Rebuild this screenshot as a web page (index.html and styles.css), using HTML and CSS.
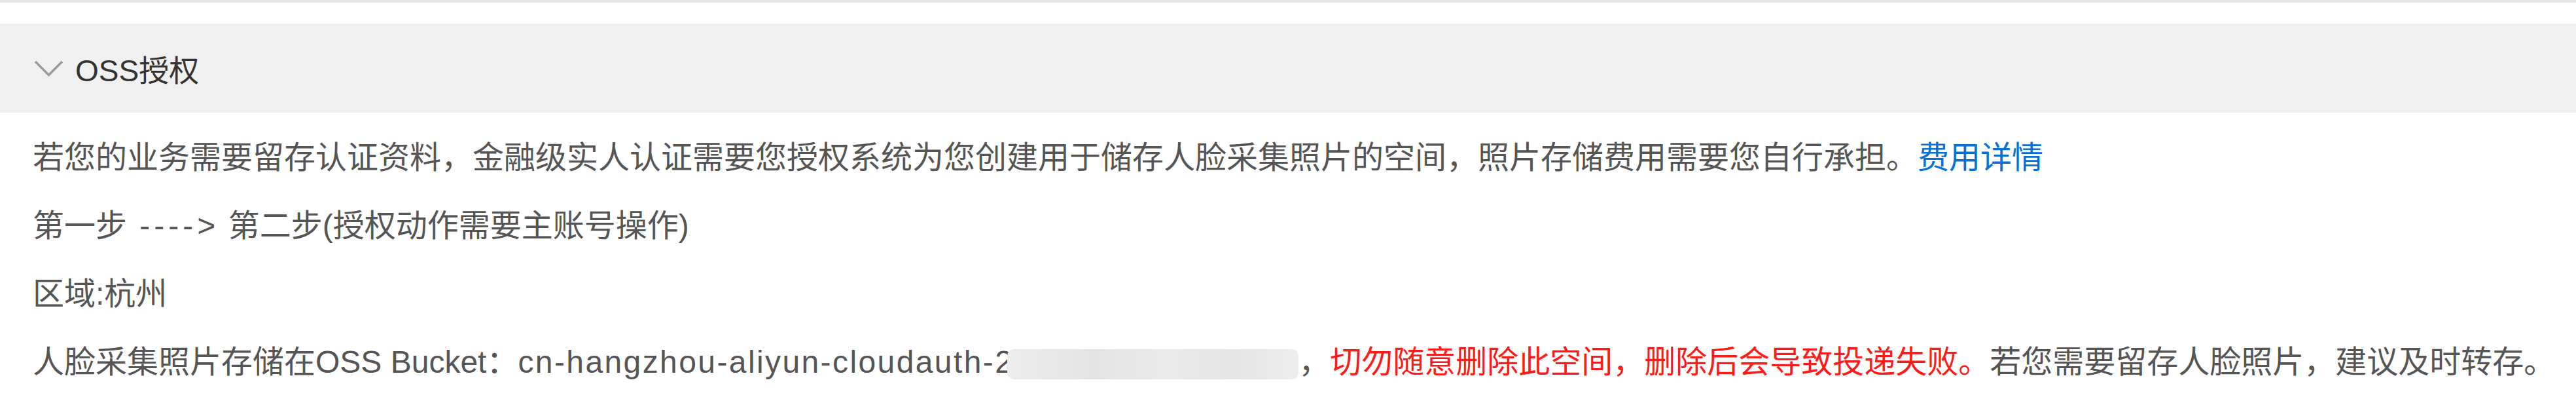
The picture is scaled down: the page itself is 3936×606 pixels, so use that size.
FILE: index.html
```html
<!DOCTYPE html>
<html lang="zh-CN">
<head>
<meta charset="utf-8">
<title>OSS授权</title>
<link rel="stylesheet" href="styles.css">
</head>
<body>
<div class="topline"></div>
<section class="panel">
  <div class="panel-header">
    <svg class="chevron" viewBox="0 0 45 25" width="45" height="25" aria-hidden="true">
      <polyline points="2,2 22.5,22.5 43,2" fill="none" stroke="#9b9b9b" stroke-width="3.5"/>
    </svg>
    <span class="panel-title">OSS授权</span>
  </div>
  <div class="panel-body">
    <p class="line">若您的业务需要留存认证资料，金融级实人认证需要您授权系统为您创建用于储存人脸采集照片的空间，照片存储费用需要您自行承担。<a class="link" href="#">费用详情</a></p>
    <p class="line">第一步<span class="arrow"> ----&gt;</span> 第二步(授权动作需要主账号操作)</p>
    <p class="line">区域:杭州</p>
    <p class="line">人脸采集照片存储在OSS Bucket：<span class="bucket">cn-hangzhou-aliyun-cloudauth-2</span><span class="masked"></span>，<span class="warn">切勿随意删除此空间，删除后会导致投递失败。</span>若您需要留存人脸照片，建议及时转存。</p>
  </div>
</section>
</body>
</html>
```

FILE: styles.css
```css
html, body {
  margin: 0;
  padding: 0;
  background: #ffffff;
}

body {
  font-family: "Liberation Sans", "Noto Sans CJK SC", sans-serif;
}

.topline {
  height: 4px;
  background: #e6e6e6;
}

.panel {
  margin-top: 32px;
}

.panel-header {
  height: 136px;
  background: #f0f0f0;
  display: flex;
  align-items: center;
  gap: 18px;
  padding-left: 52px;
}

.chevron {
  display: block;
  width: 45px;
  height: 25px;
}

.panel-title {
  font-size: 46px;
  color: #333333;
}

.panel-body {
  padding: 17px 0 0 50px;
  font-size: 48px;
  color: #555555;
}

.line {
  margin: 0;
  line-height: 104px;
  white-space: nowrap;
}

.link {
  color: #0a6fd6;
  text-decoration: none;
}

.warn {
  color: #ff1a1a;
}

.arrow {
  letter-spacing: 6px;
}

.bucket {
  letter-spacing: 2.4px;
}

.masked {
  display: inline-block;
  width: 445px;
  height: 46px;
  margin-left: -10px;
  vertical-align: middle;
  border-radius: 10px;
  background: linear-gradient(90deg, #ededed 0%, #e4e4e4 30%, #ebebeb 55%, #e5e5e5 78%, #eeeeee 100%);
}
```
